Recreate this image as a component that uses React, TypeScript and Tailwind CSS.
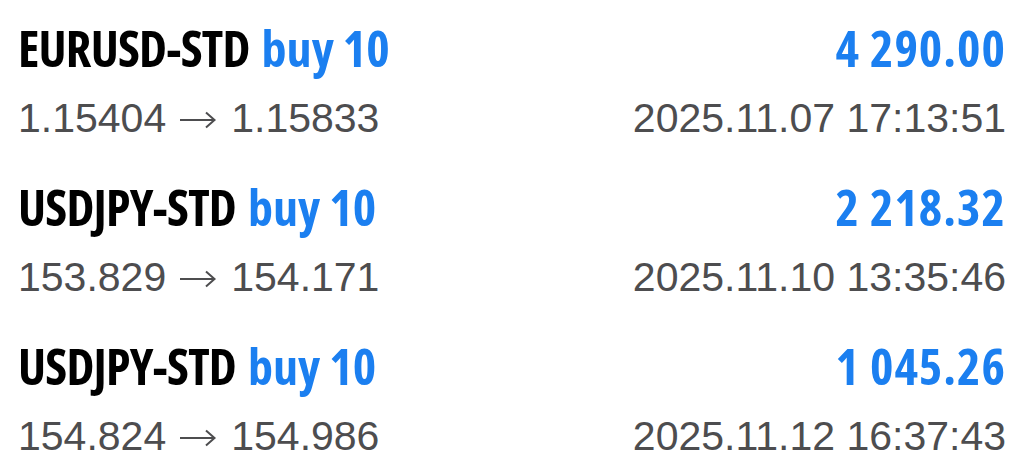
import React from "react";

interface Trade {
  symbol: string;
  side: string;
  volume: number;
  open: string;
  close: string;
  profit: string;
  time: string;
}

const trades: Trade[] = [
  { symbol: "EURUSD-STD", side: "buy", volume: 10, open: "1.15404", close: "1.15833", profit: "4 290.00", time: "2025.11.07 17:13:51" },
  { symbol: "USDJPY-STD", side: "buy", volume: 10, open: "153.829", close: "154.171", profit: "2 218.32", time: "2025.11.10 13:35:46" },
  { symbol: "USDJPY-STD", side: "buy", volume: 10, open: "154.824", close: "154.986", profit: "1 045.26", time: "2025.11.12 16:37:43" },
];

// thin right arrow between open / close price
function Arrow() {
  return (
    <svg width="38" height="20" viewBox="0 0 38 20" fill="none" className="ml-[13px] mr-[14px] mt-[2px]">
      <path d="M1 10H35" stroke="#4d4d4f" strokeWidth="2" />
      <path d="M27 2.5L35.5 10L27 17.5" stroke="#4d4d4f" strokeWidth="2" />
    </svg>
  );
}

function TradeRow({ trade }: { trade: Trade }) {
  return (
    <div className="h-[159px] flex flex-col">
      {/* top line: symbol + side, profit */}
      <div className="flex items-center justify-between h-[50px] leading-[50px] text-[50px] font-bold font-['Open_Sans',sans-serif] font-stretch-condensed">
        <div className="whitespace-nowrap">
          <span className="text-black tracking-[-0.8px]">{trade.symbol}</span>
          <span className="text-[#1b7ff0] ml-[12px]">
            {trade.side} {trade.volume}
          </span>
        </div>
        <div className="text-[#1b7ff0] whitespace-nowrap tracking-[1px]">{trade.profit}</div>
      </div>
      {/* bottom line: prices, time */}
      <div className="mt-[25px] flex items-center justify-between h-[41px] leading-[41px] text-[41px] text-[#4d4d4f] font-['Liberation_Sans',Arial,sans-serif]">
        <div className="whitespace-nowrap flex items-center">
          <span>{trade.open}</span>
          <Arrow />
          <span>{trade.close}</span>
        </div>
        <div className="whitespace-nowrap">{trade.time}</div>
      </div>
    </div>
  );
}

export default function App() {
  return (
    <div className="w-[1024px] h-[458px] bg-white overflow-hidden pt-[23px] pl-[18px] pr-[18px]">
      {trades.map((t, i) => (
        <TradeRow key={i} trade={t} />
      ))}
    </div>
  );
}
